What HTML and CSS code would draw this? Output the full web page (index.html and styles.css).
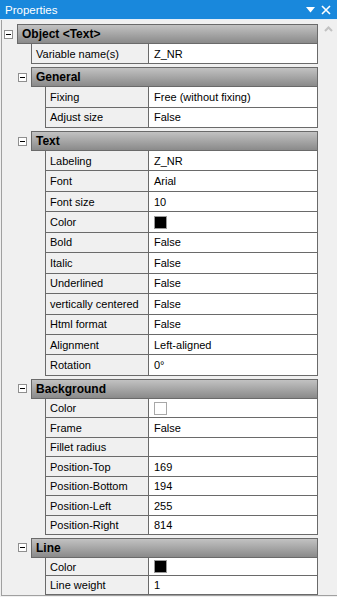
FILE: index.html
```html
<!DOCTYPE html>
<html lang="en">
<head>
  <meta charset="UTF-8">
  <title>Properties</title>
  <link rel="stylesheet" href="styles.css">
</head>
<body>
  <div class="titlebar">
    <span class="caption">Properties</span>
    <span class="tb-btn">
      <svg width="9" height="6" viewBox="0 0 9 6"><path d="M0 0H9L4.5 5.5Z" fill="#fff"/></svg>
    </span>
    <span class="tb-btn">
      <svg width="10" height="10" viewBox="0 0 10 10"><path d="M1 1L9 9M9 1L1 9" stroke="#fff" stroke-width="1.6"/></svg>
    </span>
  </div>

  <div class="panel">
    <div class="list">
      <!-- Object -->
      <div class="head lvl0"><span class="toggle"></span><div class="title">Object &lt;Text&gt;</div></div>
      <div class="grp g-object">
        <div class="row lvl0"><div class="label">Variable name(s)</div><div class="value">Z_NR</div></div>
      </div>

      <!-- General -->
      <div class="head lvl1"><span class="toggle"></span><div class="title">General</div></div>
      <div class="grp g-general">
        <div class="row lvl1"><div class="label">Fixing</div><div class="value">Free (without fixing)</div></div>
        <div class="row lvl1"><div class="label">Adjust size</div><div class="value">False</div></div>
      </div>

      <!-- Text -->
      <div class="head lvl1"><span class="toggle"></span><div class="title">Text</div></div>
      <div class="grp g-text">
        <div class="row lvl1"><div class="label">Labeling</div><div class="value">Z_NR</div></div>
        <div class="row lvl1"><div class="label">Font</div><div class="value">Arial</div></div>
        <div class="row lvl1"><div class="label">Font size</div><div class="value">10</div></div>
        <div class="row lvl1"><div class="label">Color</div><div class="value"><span class="swatch black"></span></div></div>
        <div class="row lvl1"><div class="label">Bold</div><div class="value">False</div></div>
        <div class="row lvl1"><div class="label">Italic</div><div class="value">False</div></div>
        <div class="row lvl1"><div class="label">Underlined</div><div class="value">False</div></div>
        <div class="row lvl1"><div class="label">vertically centered</div><div class="value">False</div></div>
        <div class="row lvl1"><div class="label">Html format</div><div class="value">False</div></div>
        <div class="row lvl1"><div class="label">Alignment</div><div class="value">Left-aligned</div></div>
        <div class="row lvl1"><div class="label">Rotation</div><div class="value">0°</div></div>
      </div>

      <!-- Background -->
      <div class="head lvl1"><span class="toggle"></span><div class="title">Background</div></div>
      <div class="grp g-background">
        <div class="row lvl1"><div class="label">Color</div><div class="value"><span class="swatch white"></span></div></div>
        <div class="row lvl1"><div class="label">Frame</div><div class="value">False</div></div>
        <div class="row lvl1"><div class="label">Fillet radius</div><div class="value"></div></div>
        <div class="row lvl1"><div class="label">Position-Top</div><div class="value">169</div></div>
        <div class="row lvl1"><div class="label">Position-Bottom</div><div class="value">194</div></div>
        <div class="row lvl1"><div class="label">Position-Left</div><div class="value">255</div></div>
        <div class="row lvl1"><div class="label">Position-Right</div><div class="value">814</div></div>
      </div>

      <!-- Line -->
      <div class="head lvl1 h-line"><span class="toggle"></span><div class="title">Line</div></div>
      <div class="grp g-line">
        <div class="row lvl1"><div class="label">Color</div><div class="value"><span class="swatch black"></span></div></div>
        <div class="row lvl1"><div class="label">Line weight</div><div class="value">1</div></div>
      </div>
    </div>

    <div class="scrollbar">
      <svg width="9" height="6" viewBox="0 0 9 6"><path d="M1 5L4.5 1.5L8 5" fill="none" stroke="#c2c2c2" stroke-width="2"/></svg>
    </div>
  </div>
</body>
</html>
```

FILE: styles.css
```css
body {
  margin: 0;
  background: #f0f0f0;
  font-family: "Liberation Sans", Arial, sans-serif;
  font-size: 11px;
  color: #000;
}

.titlebar {
  height: 19px;
  background: #1988dc;
  color: #fff;
  display: flex;
  align-items: center;
  padding-left: 5px;
  padding-right: 3px;
  border-bottom: 1px solid #e3eef8;
}
.caption {
  flex: 1;
  font-size: 11.5px;
}
.tb-btn {
  width: 16px;
  height: 19px;
  display: flex;
  align-items: center;
  justify-content: center;
}

.panel {
  display: flex;
  height: 575px;
  overflow: hidden;
  margin-left: 1px;
  border-left: 1px solid #a0a0a0;
  border-bottom: 1px solid #a0a0a0;
}
.list {
  width: 316px;
  padding-top: 4px;
}
.scrollbar {
  flex: 1;
  margin-left: 2px;
  background: #f0f0f0;
  display: flex;
  justify-content: center;
  align-items: flex-start;
  padding-top: 6px;
}

/* group headers */
.head {
  display: flex;
  align-items: center;
  height: 20px;
  margin-top: 3px;
}
.head.lvl0 {
  margin-top: 0;
  padding-left: 2px;
}
.head.lvl1 {
  padding-left: 16px;
}
.head.h-line {
  margin-top: 2.5px;
}
.toggle {
  width: 9px;
  height: 9px;
  box-sizing: border-box;
  border: 1px solid #8f8f8f;
  background: #fff;
  margin-right: 4px;
  position: relative;
}
.toggle::after {
  content: "";
  position: absolute;
  left: 1px;
  top: 3px;
  width: 5px;
  height: 1px;
  background: #000;
}
.title {
  flex: 1;
  height: 20px;
  box-sizing: border-box;
  border: 1px solid #6a6a6a;
  background: linear-gradient(#c2c2c2, #8a8a8a);
  font-weight: bold;
  font-size: 12px;
  line-height: 18px;
  padding-left: 4px;
}

/* property rows */
.row {
  display: flex;
  height: 20px;
  flex-shrink: 0;
}
.g-general .row { height: 20.5px; }
.g-text .row { height: 20.45px; }
.g-background .row { height: 19.5px; }
.g-line .row { height: 18.5px; }

.row.lvl0 {
  margin-left: 29px;
}
.row.lvl1 {
  margin-left: 43px;
}
.label,
.value {
  box-sizing: border-box;
  border-bottom: 1px solid #6a6a6a;
  border-right: 1px solid #6a6a6a;
  white-space: nowrap;
  display: flex;
  align-items: center;
}
.label {
  flex: 1;
  border-left: 1px solid #6a6a6a;
  padding-left: 4px;
}
.value {
  width: 169px;
  background: #fff;
  padding-left: 5px;
}

.swatch {
  width: 13px;
  height: 13px;
  box-sizing: border-box;
  border: 1px solid #9a9a9a;
}
.swatch.black {
  background: #000;
}
.swatch.white {
  background: #fff;
  border-color: #a8a8a8;
}
```
